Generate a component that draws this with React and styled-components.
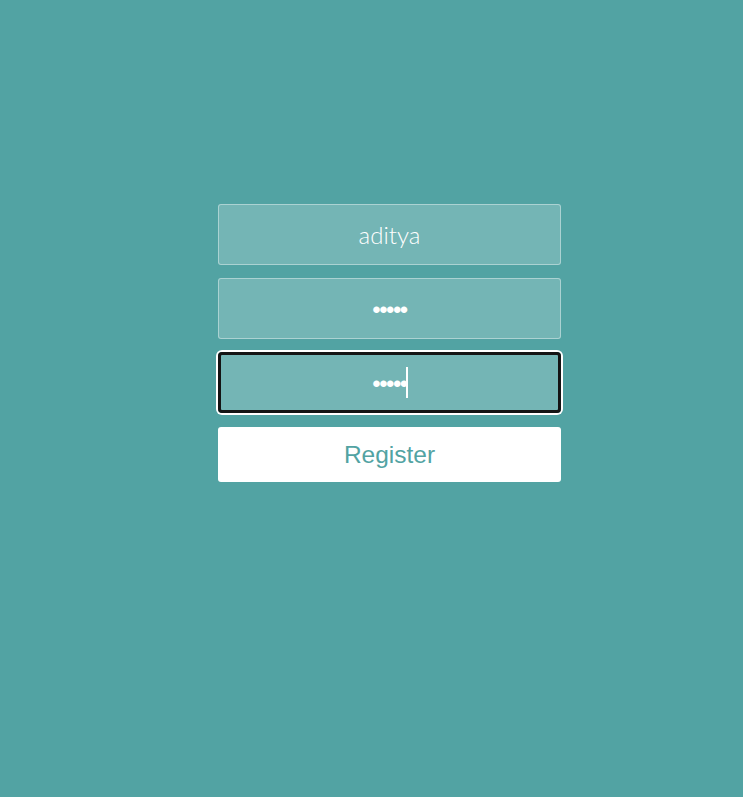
import React from "react";
import styled, { createGlobalStyle } from "styled-components";

const GlobalStyle = createGlobalStyle`
  html, body {
    margin: 0;
    padding: 0;
    background: #52a3a3;
  }
  body {
    min-height: 797px;
    font-family: Lato, "Liberation Sans", sans-serif;
  }
`;

const Page = styled.div`
  min-height: 797px;
  padding: 204px 0 0 218px;
  box-sizing: border-box;
`;

const Form = styled.form`
  width: 343px;
  display: flex;
  flex-direction: column;
  gap: 13px;
`;

const FieldWrap = styled.div`
  position: relative;
`;

const Field = styled.input`
  display: block;
  box-sizing: border-box;
  width: 100%;
  height: 61px;
  margin: 0;
  padding: 0 16px;
  border: 1px solid rgba(255, 255, 255, 0.4);
  border-radius: 3px;
  background: rgba(255, 255, 255, 0.2);
  color: #fff;
  caret-color: transparent;
  font-family: Lato, "Liberation Sans", sans-serif;
  font-weight: 300;
  font-size: 24px;
  text-align: center;
  outline: none;

  &[type="password"] {
    font-family: "Liberation Sans", Arial, sans-serif;
    letter-spacing: -1.5px;
    padding-top: 2px;
  }

  ${(p) =>
    p.$focused &&
    `
    border: 3px solid #141414;
    border-radius: 4px;
    box-shadow: 0 0 0 2px #fff;
  `}
`;

const Caret = styled.span`
  position: absolute;
  left: 188px;
  top: 15px;
  width: 2px;
  height: 31px;
  background: #fff;
  pointer-events: none;
`;

const Button = styled.button`
  box-sizing: border-box;
  height: 55px;
  margin-top: 1px;
  border: none;
  border-radius: 3px;
  background: #fff;
  color: #52a3a3;
  font-family: "Liberation Sans", Arial, sans-serif;
  font-size: 24.5px;
  cursor: pointer;
`;

export default function App() {
  return (
    <>
      <GlobalStyle />
      <Page>
        <Form onSubmit={(e) => e.preventDefault()}>
          <Field type="text" defaultValue="aditya" placeholder="Username" />
          <Field type="password" defaultValue="aaaaa" placeholder="Password" />
          <FieldWrap>
            <Field
              type="password"
              defaultValue="aaaaa"
              placeholder="Confirm password"
              $focused
            />
            <Caret />
          </FieldWrap>
          <Button type="submit">Register</Button>
        </Form>
      </Page>
    </>
  );
}
